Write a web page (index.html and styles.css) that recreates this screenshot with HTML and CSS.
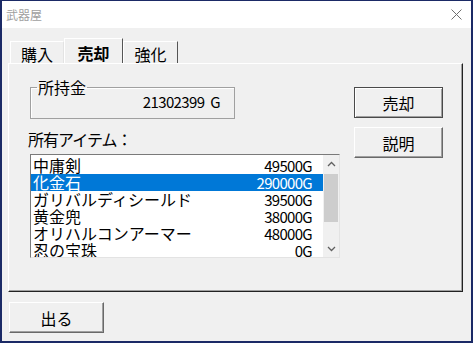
FILE: index.html
```html
<!DOCTYPE html>
<html lang="ja">
<head>
    <meta charset="UTF-8">
    <title>武器屋</title>
    <link rel="stylesheet" href="styles.css">
</head>
<body>
    <div class="window">
        <div class="titlebar">
            <span class="title">武器屋</span>
            <svg class="close" width="11" height="11" viewBox="0 0 11 11">
                <path d="M0.5 0.5 L10.5 10.5 M10.5 0.5 L0.5 10.5" stroke="#707070" stroke-width="1" fill="none"/>
            </svg>
        </div>
        <div class="client">
            <div class="tabs">
                <div class="tab tab-buy">購入</div>
                <div class="tab tab-sell active">売却</div>
                <div class="tab tab-up">強化</div>
            </div>
            <div class="panel">
                <div class="left">
                    <fieldset class="money">
                        <legend>所持金</legend>
                        <div class="money-value">21302399 G</div>
                    </fieldset>
                    <div class="list-label">所有アイテム：</div>
                    <div class="listbox">
                        <ul class="items">
                            <li><span>中庸剣</span><span class="price">49500G</span></li>
                            <li class="selected"><span>化金石</span><span class="price">290000G</span></li>
                            <li><span>ガリバルディシールド</span><span class="price">39500G</span></li>
                            <li><span>黄金兜</span><span class="price">38000G</span></li>
                            <li><span>オリハルコンアーマー</span><span class="price">48000G</span></li>
                            <li><span>忍の宝珠</span><span class="price">0G</span></li>
                        </ul>
                        <div class="scrollbar">
                            <div class="arrow">
                                <svg width="9" height="6" viewBox="0 0 9 6"><path d="M1 5 L4.5 1.5 L8 5" stroke="#606060" stroke-width="1.3" fill="none"/></svg>
                            </div>
                            <div class="thumb"></div>
                            <div class="track"></div>
                            <div class="arrow">
                                <svg width="9" height="6" viewBox="0 0 9 6"><path d="M1 1 L4.5 4.5 L8 1" stroke="#606060" stroke-width="1.3" fill="none"/></svg>
                            </div>
                        </div>
                    </div>
                </div>
                <div class="actions">
                    <button class="btn default">売却</button>
                    <button class="btn">説明</button>
                </div>
            </div>
            <div class="footer">
                <button class="btn exit">出る</button>
            </div>
        </div>
    </div>
</body>
</html>
```

FILE: styles.css
```css
body {
    margin: 0;
    font-family: "Noto Sans CJK JP", "Noto Sans", sans-serif;
    color: #000;
}
.window {
    width: 473px;
    height: 343px;
    box-sizing: border-box;
    border: 2px solid #1b2a66;
    border-top-width: 1px;
    background: #f0f0f0;
    display: flex;
    flex-direction: column;
}
.titlebar {
    height: 27px;
    background: #fff;
    display: flex;
    align-items: center;
    justify-content: space-between;
    padding: 0 9px 0 4px;
}
.title {
    font-size: 12px;
    color: #a0a0a0;
    line-height: 14px;
}
.client {
    flex: 1;
    padding: 10px 8px 0 6px;
    display: flex;
    flex-direction: column;
}
.tabs {
    display: flex;
    align-items: flex-end;
    height: 25px;
    padding-left: 2px;
}
.tab {
    height: 22px;
    line-height: 24px;
    font-size: 16px;
    text-align: center;
    box-sizing: border-box;
    border-top: 1px solid #fff;
    border-left: 1px solid #fff;
    border-right: 1px solid #555;
}
.tab-buy {
    width: 54px;
    border-right-color: #e3e3e3;
}
.tab-sell {
    width: 59px;
}
.tab-up {
    width: 55px;
}
.tab.active {
    height: 25px;
    line-height: 29px;
    font-weight: bold;
}
.panel {
    height: 229px;
    box-sizing: border-box;
    border: 1px solid;
    border-color: #fff #222 #222 #fff;
    box-shadow: inset -1px -1px #a0a0a0;
    display: flex;
    gap: 14px;
    padding: 14px 0 0 21px;
}
.left {
    width: 310px;
    display: flex;
    flex-direction: column;
}
.money {
    margin: 0;
    width: 205px;
    box-sizing: border-box;
    border: 1px solid #a0a0a0;
    box-shadow: inset 1px 1px #fff;
    padding: 0 14px 10px 6px;
}
.money legend {
    padding: 0 1px;
    font-size: 16px;
    line-height: 18px;
}
.money-value {
    text-align: right;
    font-size: 15px;
    line-height: 12px;
    letter-spacing: -0.6px;
    word-spacing: 3px;
}
.list-label {
    margin-top: 11px;
    margin-left: -2px;
    font-size: 16px;
    line-height: 18px;
    letter-spacing: -1px;
}
.listbox {
    margin-top: 6px;
    height: 104px;
    box-sizing: border-box;
    border: 1px solid;
    border-color: #7a7a7a #e3e3e3 #e3e3e3 #7a7a7a;
    background: #fff;
    display: flex;
    overflow: hidden;
}
.items {
    flex: 1;
    list-style: none;
    margin: 0;
    padding: 2px 0 0 0;
    overflow: hidden;
}
.items li {
    display: flex;
    justify-content: space-between;
    height: 17px;
    line-height: 17px;
    font-size: 16px;
    padding: 0 11px 0 2px;
    white-space: nowrap;
}
.items li.selected {
    background: #0078d7;
    color: #fff;
}
.price {
    font-size: 15px;
    letter-spacing: -0.7px;
}
.scrollbar {
    width: 16px;
    background: #f0f0f0;
    display: flex;
    flex-direction: column;
    align-items: center;
}
.arrow {
    height: 17px;
    display: flex;
    align-items: center;
    justify-content: center;
}
.thumb {
    width: 14px;
    height: 48px;
    margin-top: 2px;
    background: #cdcdcd;
}
.track {
    flex: 1;
}
.actions {
    width: 89px;
    display: flex;
    flex-direction: column;
    gap: 9px;
    padding-top: 9px;
}
.btn {
    height: 31px;
    box-sizing: border-box;
    font-family: inherit;
    font-size: 16px;
    color: #000;
    background: #f0f0f0;
    border: 1px solid;
    border-color: #fff #696969 #696969 #fff;
    box-shadow: inset -1px -1px #a0a0a0;
    padding: 0;
}
.btn.default {
    border-color: #4a4a4a;
    box-shadow: inset 1px 1px #fff, inset -1px -1px #a0a0a0;
}
.footer {
    padding: 10px 0 0 1px;
}
.exit {
    width: 95px;
}
```
